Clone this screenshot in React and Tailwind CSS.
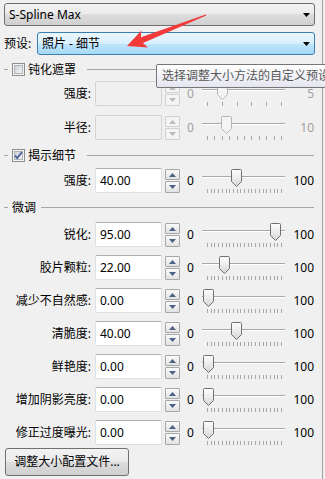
import React from "react";

const FONT = "font-['Noto_Sans','Noto_Sans_CJK_SC',sans-serif]";

const BTN_BG =
  "bg-[linear-gradient(to_bottom,#f2f2f2_0%,#ebebeb_50%,#dddddd_50%,#cfcfcf_100%)]";
const HOT_BG =
  "bg-[linear-gradient(to_bottom,#eaf6fd_0%,#d9f0fc_50%,#bee6fd_50%,#a7d9f5_100%)]";

const fineRows = [
  { label: "锐化:", value: "95.00", f: 0.95 },
  { label: "胶片颗粒:", value: "22.00", f: 0.22 },
  { label: "减少不自然感:", value: "0.00", f: 0 },
  { label: "清脆度:", value: "40.00", f: 0.4 },
  { label: "鲜艳度:", value: "0.00", f: 0 },
  { label: "增加阴影亮度:", value: "0.00", f: 0 },
  { label: "修正过度曝光:", value: "0.00", f: 0 },
];

const DownArrow = () => (
  <svg width="7" height="4" viewBox="0 0 7 4">
    <path d="M0 0h7L3.5 4z" fill="#000" />
  </svg>
);

const Combo = ({ text, hot, className }) => (
  <div
    className={`flex items-center justify-between rounded-[3px] border pl-[4px] pr-[4px] h-[23px] ${
      hot ? `border-[#3c7fb1] ${HOT_BG}` : `border-[#707070] ${BTN_BG}`
    } ${className}`}
  >
    <span className="text-[12px] text-black leading-none">{text}</span>
    <DownArrow />
  </div>
);

const CheckBox = ({ checked }) => (
  <svg width="13" height="13" viewBox="0 0 13 13">
    <defs>
      <linearGradient id="cbg" x1="0" y1="0" x2="1" y2="1">
        <stop offset="0" stopColor="#cbcfd5" />
        <stop offset="1" stopColor="#f6f6f6" />
      </linearGradient>
    </defs>
    <rect x="0.5" y="0.5" width="12" height="12" fill="#f4f4f4" stroke="#8e8f8f" />
    <rect x="2.5" y="2.5" width="8" height="8" fill="url(#cbg)" stroke="#aeb3b9" />
    {checked && (
      <path
        d="M3 6.5l2.2 2.6L10 3"
        fill="none"
        stroke="#4a5f97"
        strokeWidth="1.8"
      />
    )}
  </svg>
);

const GroupTitle = ({ title, check, checked, lineGap, className }) => (
  <div className={`flex items-center h-[13px] pl-[4px] pr-[11px] ${className}`}>
    <div className="w-[4px] h-px bg-[#a6a6a6]" />
    {check ? (
      <>
        <div className="ml-[4px] flex">
          <CheckBox checked={checked} />
        </div>
        <span className="ml-[3px] text-[12px] leading-none text-black w-[48px]">{title}</span>
      </>
    ) : (
      <span className="ml-[4px] text-[12px] leading-none text-black">{title}</span>
    )}
    <div className={`flex-1 h-px bg-[#a6a6a6] ${lineGap}`} />
  </div>
);

const SpinArrow = ({ up, disabled }) => (
  <svg width="7" height="4" viewBox="0 0 7 4">
    <path
      d={up ? "M0 4h7L3.5 0z" : "M0 0h7L3.5 4z"}
      fill={disabled ? "#b9bcc2" : "#4d6185"}
    />
  </svg>
);

const Spinner = ({ disabled }) => {
  const btn = `flex items-center justify-center w-[15px] h-[11px] border rounded-[1px] ${
    disabled
      ? "border-[#d0d0d0] bg-[#f4f4f4]"
      : "border-[#a7a7a7] bg-[linear-gradient(to_bottom,#fafafa,#e2e2e2)]"
  }`;
  return (
    <div className="ml-[3px] flex flex-col gap-[1px] self-start pt-[1px]">
      <div className={btn}>
        <SpinArrow up disabled={disabled} />
      </div>
      <div className={`${btn} h-[12px]`}>
        <SpinArrow disabled={disabled} />
      </div>
    </div>
  );
};

const Thumb = ({ disabled }) => (
  <svg width="11" height="18" viewBox="0 0 11 18">
    <defs>
      <linearGradient id="thg" x1="0" y1="0" x2="0" y2="1">
        <stop offset="0" stopColor="#fdfdfd" />
        <stop offset="0.5" stopColor="#ececec" />
        <stop offset="1" stopColor="#d4d4d4" />
      </linearGradient>
    </defs>
    <path
      d="M0.5 1.5a1 1 0 0 1 1-1h8a1 1 0 0 1 1 1v11l-5 5l-5-5z"
      fill={disabled ? "#f4f4f4" : "url(#thg)"}
      stroke={disabled ? "#b5b5b5" : "#707070"}
    />
  </svg>
);

const Slider = ({ f, ticks, disabled }) => (
  <div className="relative ml-[8px] w-[83px] h-[25px] self-start">
    <div className="absolute left-0 right-0 top-[8px] h-[2px] border-t border-[#a8a8a8] bg-white" />
    <div className="absolute top-[1px] flex" style={{ left: `${Math.round(1 + f * 71)}px` }}>
      <Thumb disabled={disabled} />
    </div>
    {Array.from({ length: ticks }).map((_, i) => (
      <div
        key={i}
        className="absolute top-[21px] w-px h-[4px] bg-[#a8a8a8]"
        style={{ left: `${Math.round(5 + (i * 74) / (ticks - 1))}px` }}
      />
    ))}
  </div>
);

const SliderRow = ({ label, value, f, max = "100", ticks = 21, disabled, className }) => (
  <div className={`flex items-center h-[25px] text-[12px] leading-none ${className}`}>
    <div className="w-[92px] pr-[1px] text-right text-black whitespace-nowrap">{label}</div>
    <div
      className={`ml-[3px] w-[67px] h-[25px] flex items-center pl-[4px] rounded-[2px] border ${
        disabled
          ? "border-[#d3d3d3] bg-[#f0f0f0]"
          : "border-[#dbdfe6] border-t-[#abadb3] bg-white"
      }`}
    >
      <span className="text-black">{value}</span>
    </div>
    <Spinner disabled={disabled} />
    <span className={`ml-[7px] w-[7px] ${disabled ? "text-[#a0a0a0]" : "text-black"}`}>0</span>
    <Slider f={f} ticks={ticks} disabled={disabled} />
    <span className={`flex-1 text-right pr-[11px] ${disabled ? "text-[#a0a0a0]" : "text-black"}`}>
      {max}
    </span>
  </div>
);

export default function App() {
  return (
    <div className={`relative w-[325px] h-[479px] overflow-hidden bg-[#f0f0f0] pt-[3px] ${FONT}`}>
      <Combo text="S-Spline Max" className="ml-[4px] w-[311px]" />
      <div className="mt-[6px] flex items-center h-[23px]">
        <span className="w-[37px] pl-[4px] text-[12px] leading-none text-black">预设:</span>
        <Combo text="照片 - 细节" hot className="w-[278px]" />
      </div>

      <GroupTitle title="钝化遮罩" check checked={false} lineGap="ml-[11px]" className="mt-[8px]" />
      <SliderRow label="强度:" value="" f={0.2} max="5" ticks={6} disabled className="mt-[5px]" />
      <SliderRow label="半径:" value="" f={0.25} max="10" ticks={11} disabled className="mt-[9px]" />

      <GroupTitle title="揭示细节" check checked lineGap="ml-[11px]" className="mt-[9px]" />
      <SliderRow label="强度:" value="40.00" f={0.4} className="mt-[6px]" />

      <GroupTitle title="微调" lineGap="ml-[5px]" className="mt-[8px]" />
      {fineRows.map((r) => (
        <SliderRow key={r.label} label={r.label} value={r.value} f={r.f} className="mt-[8px]" />
      ))}

      <button
        className={`mt-[3px] ml-[5px] w-[124px] h-[28px] rounded-[3px] border border-[#707070] ${BTN_BG} text-[12px] leading-none text-black`}
      >
        调整大小配置文件...
      </button>

      {/* right frame edge */}
      <div className="absolute top-0 bottom-0 left-[322px] w-px bg-[#a0a0a0]" />

      {/* red annotation arrow */}
      <svg className="absolute left-0 top-0" width="325" height="80" viewBox="0 0 325 80">
        <polygon
          points="127,46 148,47.4 143,42.9 206.2,15.6 205.8,14.4 140.8,37.3 141.4,30.6"
          fill="#f23a3a"
        />
      </svg>

      {/* tooltip */}
      <div className="absolute left-[156px] top-[64px] w-[190px] h-[24px] flex items-center pl-[5px] rounded-[2px] border border-[#767676] bg-[linear-gradient(to_bottom,#ffffff,#e4e5f0)] text-[12px] leading-none text-[#575757] whitespace-nowrap">
        选择调整大小方法的自定义预设
      </div>
    </div>
  );
}
